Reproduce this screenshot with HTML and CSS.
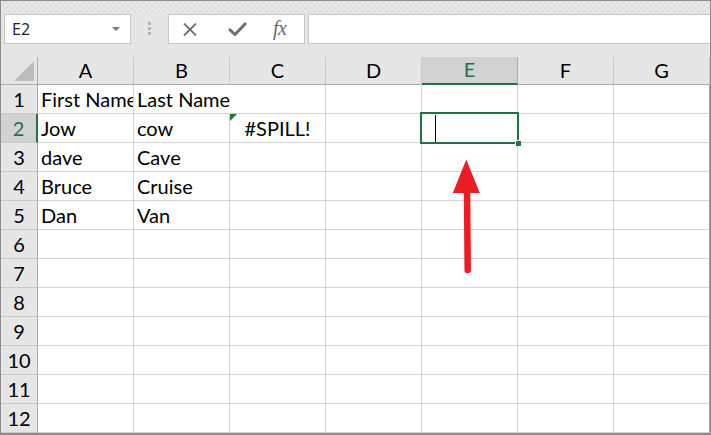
FILE: index.html
```html
<!DOCTYPE html>
<html>
<head>
<meta charset="utf-8">
<link rel="stylesheet" href="styles.css">
</head>
<body>
<div class="frame">
  <div class="topstrip"></div>
  <div class="toolbar">
    <div class="namebox"><span class="ref">E2</span><span class="dd"></span></div>
    <div class="grip"><i></i><i></i><i></i></div>
    <div class="fxgroup">
      <svg class="ic-x" width="14" height="13" viewBox="0 0 14 13"><path d="M1 0.5L13 12.5M13 0.5L1 12.5" stroke="#6e6e6e" stroke-width="1.8" fill="none"/></svg>
      <svg class="ic-ok" width="19" height="14" viewBox="0 0 19 14"><path d="M1 7L7 12.5L18 1" stroke="#6e6e6e" stroke-width="3" fill="none" stroke-linejoin="miter"/></svg>
      <span class="ic-fx">fx</span>
    </div>
    <div class="formula"></div>
  </div>
  <div class="sheet">
    <div class="corner"><svg width="22" height="22" viewBox="0 0 22 22"><path d="M21 1L21 21L1 21Z" fill="#bcbcbc"/></svg></div>
    <div class="ch">A</div><div class="ch">B</div><div class="ch">C</div><div class="ch">D</div><div class="ch sel">E</div><div class="ch">F</div><div class="ch">G</div>

    <div class="rh">1</div><div class="c clip">First Name</div><div class="c over">Last Name</div><div class="c"></div><div class="c"></div><div class="c"></div><div class="c"></div><div class="c g"></div>
    <div class="rh sel">2</div><div class="c">Jow</div><div class="c">cow</div><div class="c err"><span class="tri"></span>#SPILL!</div><div class="c"></div><div class="c active"><span class="selbox"><span class="handle"></span></span><span class="caret"></span></div><div class="c"></div><div class="c g"></div>
    <div class="rh">3</div><div class="c">dave</div><div class="c">Cave</div><div class="c"></div><div class="c"></div><div class="c"></div><div class="c"></div><div class="c g"></div>
    <div class="rh">4</div><div class="c">Bruce</div><div class="c">Cruise</div><div class="c"></div><div class="c"></div><div class="c"></div><div class="c"></div><div class="c g"></div>
    <div class="rh">5</div><div class="c">Dan</div><div class="c">Van</div><div class="c"></div><div class="c"></div><div class="c"></div><div class="c"></div><div class="c g"></div>
    <div class="rh">6</div><div class="c"></div><div class="c"></div><div class="c"></div><div class="c"></div><div class="c"></div><div class="c"></div><div class="c g"></div>
    <div class="rh">7</div><div class="c"></div><div class="c"></div><div class="c"></div><div class="c"></div><div class="c"></div><div class="c"></div><div class="c g"></div>
    <div class="rh">8</div><div class="c"></div><div class="c"></div><div class="c"></div><div class="c"></div><div class="c"></div><div class="c"></div><div class="c g"></div>
    <div class="rh">9</div><div class="c"></div><div class="c"></div><div class="c"></div><div class="c"></div><div class="c"></div><div class="c"></div><div class="c g"></div>
    <div class="rh">10</div><div class="c"></div><div class="c"></div><div class="c"></div><div class="c"></div><div class="c"></div><div class="c"></div><div class="c g"></div>
    <div class="rh">11</div><div class="c"></div><div class="c"></div><div class="c"></div><div class="c"></div><div class="c"></div><div class="c"></div><div class="c g"></div>
    <div class="rh">12</div><div class="c"></div><div class="c"></div><div class="c"></div><div class="c"></div><div class="c"></div><div class="c"></div><div class="c g"></div>
  </div>
  <svg class="arrow" width="34" height="122" viewBox="450 155 34 122">
    <path d="M466.3 159.5L479.8 193L452.8 193Z" fill="#ed1c24"/>
    <path d="M467 190L467.7 270" stroke="#ed1c24" stroke-width="6.5" stroke-linecap="round" fill="none"/>
  </svg>
</div>
</body>
</html>
```

FILE: styles.css
```css
* { box-sizing: border-box; margin: 0; padding: 0; }
body { margin: 0; background: #fff; }

.frame {
  position: relative;
  width: 711px;
  height: 435px;
  border-top: 1px solid #8c8c8c;
  border-left: 1px solid #8c8c8c;
  border-right: 1px solid #8c8c8c;
  border-bottom: 2px solid #8c8c8c;
  overflow: hidden;
  display: flex;
  flex-direction: column;
  font-family: Lato, "Liberation Sans", sans-serif;
  background: #fff;
}

.topstrip {
  height: 13px;
  flex: none;
  background-color: #e5e5e5;
  background-image: repeating-conic-gradient(#e0e0e0 0 25%, #e9e9e9 0 50%);
  background-size: 6px 6px;
}

.toolbar {
  height: 43px;
  flex: none;
  background: #e6e6e6;
  display: flex;
  align-items: flex-start;
}

.namebox {
  margin-left: 3px;
  width: 127px;
  height: 30px;
  border: 1px solid #c6c6c6;
  background: #fff;
  display: flex;
  align-items: center;
  justify-content: space-between;
  padding: 0 10px 0 7px;
}
.ref { font-family: "Open Sans", sans-serif; font-size: 16px; color: #222; }
.dd {
  width: 0; height: 0;
  border-left: 4px solid transparent;
  border-right: 4px solid transparent;
  border-top: 4px solid #7c7c7c;
}

.grip {
  margin-left: 17px;
  width: 3px;
  padding-top: 8px;
  display: flex;
  flex-direction: column;
  gap: 2px;
}
.grip i { display: block; width: 3px; height: 3px; background: #b4b4b4; }

.fxgroup {
  margin-left: 17px;
  width: 137px;
  height: 30px;
  border: 1px solid #c6c6c6;
  background: #fff;
  display: flex;
  align-items: center;
  padding-left: 14px;
}
.ic-x { flex: none; }
.ic-ok { flex: none; margin-left: 31px; }
.ic-fx {
  margin-left: 26px;
  font-family: "Liberation Serif", serif;
  font-style: italic;
  font-size: 20px;
  color: #6a6a6a;
  letter-spacing: -0.5px;
  line-height: 1;
  padding-bottom: 2px;
}

.formula {
  margin-left: 3px;
  flex: 1;
  height: 30px;
  border: 1px solid #c6c6c6;
  border-right: none;
  background: #fff;
}

.sheet {
  flex: none;
  display: grid;
  grid-template-columns: 37px repeat(7, 96px);
  grid-template-rows: 28px repeat(12, 29px);
  font-size: 20px;
  color: #000;
}

.sheet > div {
  display: flex;
  align-items: flex-end;
  line-height: 24px;
  padding-bottom: 2px;
  white-space: nowrap;
}

.corner {
  background: #e6e6e6;
  border-right: 1px solid #ababab;
  border-bottom: 1px solid #ababab;
  align-items: center !important;
  justify-content: flex-end;
  padding: 0 2px 0 0 !important;
}
.corner svg { display: block; margin-top: 1px; }

.ch {
  background: #e6e6e6;
  border-right: 1px solid #c9c9c9;
  border-bottom: 1px solid #ababab;
  justify-content: center;
}
.ch.sel {
  background: #d2d2d2;
  color: #217346;
  border-bottom: 2px solid #217346;
  border-right-color: #ababab;
}

.rh {
  background: #e6e6e6;
  border-right: 1px solid #ababab;
  border-bottom: 1px solid #c9c9c9;
  justify-content: center;
}
.rh.sel {
  background: #d2d2d2;
  color: #217346;
  border-right: 2px solid #217346;
}

.c {
  border-right: 1px solid #d4d4d4;
  border-bottom: 1px solid #d4d4d4;
  padding-left: 3px;
}
.c.g { border-right-color: #a0a0a0; }
.c.clip { overflow: hidden; }
.c.over { overflow: visible; border-right-color: transparent; }
.c.err { position: relative; justify-content: center; padding-left: 0; }

.tri {
  position: absolute;
  left: 0;
  top: 0;
  width: 0; height: 0;
  border-top: 7px solid #1f7d1f;
  border-right: 7px solid transparent;
}

.c.active { position: relative; }
.selbox {
  position: absolute;
  left: -2px;
  top: -2px;
  width: 99px;
  height: 32px;
  border: 2px solid #217346;
}
.handle {
  position: absolute;
  right: -4px;
  bottom: -4px;
  width: 6px;
  height: 6px;
  background: #217346;
  border-left: 1px solid #fff;
  border-top: 1px solid #fff;
}
.caret {
  position: absolute;
  left: 13px;
  top: 1px;
  width: 1px;
  height: 27px;
  background: #000;
}

.arrow {
  position: absolute;
  left: 449px;
  top: 154px;
}
```
